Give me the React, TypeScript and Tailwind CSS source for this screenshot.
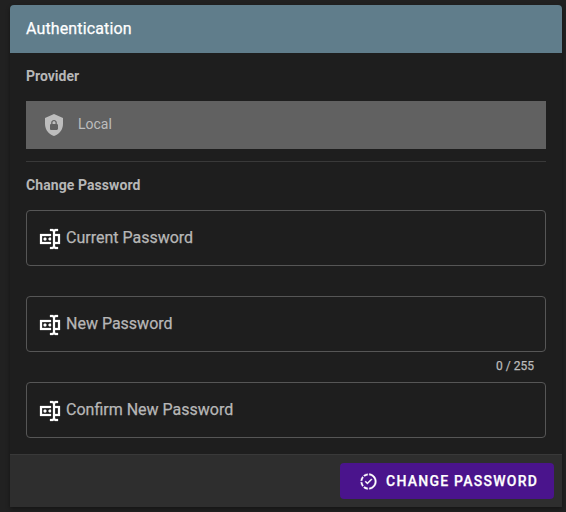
import React from "react";

const ICONS = {
  shieldLock:
    "M12,1L3,5V11C3,16.55 6.84,21.74 12,23C17.16,21.74 21,16.55 21,11V5L12,1M12,7C13.4,7 14.8,8.1 14.8,9.5V11C15.4,11 16,11.6 16,12.3V15.8C16,16.4 15.4,17 14.7,17H9.2C8.6,17 8,16.4 8,15.7V12.2C8,11.6 8.6,11 9.2,11V9.5C9.2,8.1 10.6,7 12,7M12,8.2C11.2,8.2 10.5,8.7 10.5,9.5V11H13.5V9.5C13.5,8.7 12.8,8.2 12,8.2Z",
  textboxPassword:
    "M17,7H22V17H17V19A1,1 0 0,0 18,20H20V22H17.5C16.95,22 16,21.55 16,21C16,21.55 15.05,22 14.5,22H12V20H14A1,1 0 0,0 15,19V5A1,1 0 0,0 14,4H12V2H14.5C15.05,2 16,2.45 16,3C16,2.45 16.95,2 17.5,2H20V4H18A1,1 0 0,0 17,5V7M2,7H13V9H4V15H13V17H2V7M20,15V9H17V15H20M8.5,12A1.5,1.5 0 0,0 7,10.5A1.5,1.5 0 0,0 5.5,12A1.5,1.5 0 0,0 7,13.5A1.5,1.5 0 0,0 8.5,12M13,10.89C12.39,10.33 11.44,10.38 10.88,11C10.32,11.6 10.37,12.55 11,13.11C11.55,13.63 12.43,13.63 13,13.11V10.89Z",
  progressCheck:
    "M13,2.03V2.05L13,4.05C17.39,4.59 20.5,8.58 19.96,12.97C19.5,16.61 16.64,19.5 13,19.93V21.93C18.5,21.38 22.5,16.5 21.95,11C21.5,6.25 17.73,2.5 13,2.03M11,2.06C9.05,2.25 7.19,3 5.67,4.26L7.1,5.74C8.22,4.84 9.57,4.26 11,4.06V2.06M4.26,5.67C3,7.19 2.25,9.04 2.05,11H4.05C4.24,9.58 4.8,8.23 5.69,7.1L4.26,5.67M15.5,8.5L10.62,13.38L8.5,11.26L7.44,12.32L10.62,15.5L16.56,9.56L15.5,8.5M2.06,13C2.26,14.96 3.03,16.81 4.27,18.33L5.69,16.9C4.81,15.77 4.24,14.42 4.06,13H2.06M7.1,18.37L5.67,19.74C7.18,21 9.04,21.79 11,22V20C9.58,19.82 8.23,19.25 7.1,18.37Z",
};

function Icon({ path, className }: { path: string; className: string }) {
  return (
    <svg viewBox="0 0 24 24" fill="currentColor" className={className} aria-hidden="true">
      <path d={path} />
    </svg>
  );
}

function PasswordField({ label }: { label: string }) {
  return (
    <div className="flex h-14 items-center rounded border border-[#565656] pl-[10.5px]">
      <Icon
        path={ICONS.textboxPassword}
        className="mt-0.5 size-6 shrink-0 stroke-current stroke-[0.25] text-white"
      />
      <span className="ml-[4.5px] text-base leading-5 text-[#b7b7b7] [-webkit-text-stroke:0.25px]">
        {label}
      </span>
    </div>
  );
}

export default function App() {
  return (
    <div className="h-[512px] w-[566px] bg-[#212121] pt-[5px] pl-[10px] font-['Roboto',sans-serif]">
      <section className="flex h-[502px] w-[552px] flex-col overflow-hidden rounded-t bg-[#1e1e1e] shadow-[0_2px_4px_rgba(0,0,0,0.4)]">
        <header className="flex h-12 shrink-0 items-center bg-[#607d8b] px-4 text-base tracking-[0.13px] text-white [-webkit-text-stroke:0.25px]">
          Authentication
        </header>
        <div className="flex flex-1 flex-col px-4 pt-3">
          <h2 className="text-sm leading-[22px] font-bold text-[#b7b7b7]">Provider</h2>
          <div className="mt-[14px] flex h-12 items-center bg-[#616161] px-4 text-[#bdbdbd]">
            <Icon path={ICONS.shieldLock} className="size-6 shrink-0" />
            <span className="mb-0.5 ml-3 text-sm">Local</span>
          </div>
          <hr className="mt-3 border-[#393939]" />
          <h2 className="mt-3 mb-[14px] text-sm leading-[22px] font-bold tracking-[0.08px] text-[#b7b7b7]">
            Change Password
          </h2>
          <PasswordField label="Current Password" />
          <div className="h-[30px]" />
          <PasswordField label="New Password" />
          <div className="flex h-[30px] items-center justify-end pr-3 pb-0.5 text-xs text-[#bbbbbb] [-webkit-text-stroke:0.25px]">
            0 / 255
          </div>
          <PasswordField label="Confirm New Password" />
        </div>
        <footer className="flex h-[53px] shrink-0 justify-end border-t border-[#393939] bg-[#2e2e2e] pt-2 pr-2">
          <button className="flex h-9 w-[214px] items-center rounded bg-[#4a148c] pl-[18.5px] text-sm font-medium tracking-[1.25px] text-white [-webkit-text-stroke:0.25px]">
            <Icon
              path={ICONS.progressCheck}
              className="mr-[8.5px] size-[19px] shrink-0 stroke-current stroke-[0.4]"
            />
            CHANGE PASSWORD
          </button>
        </footer>
      </section>
    </div>
  );
}
